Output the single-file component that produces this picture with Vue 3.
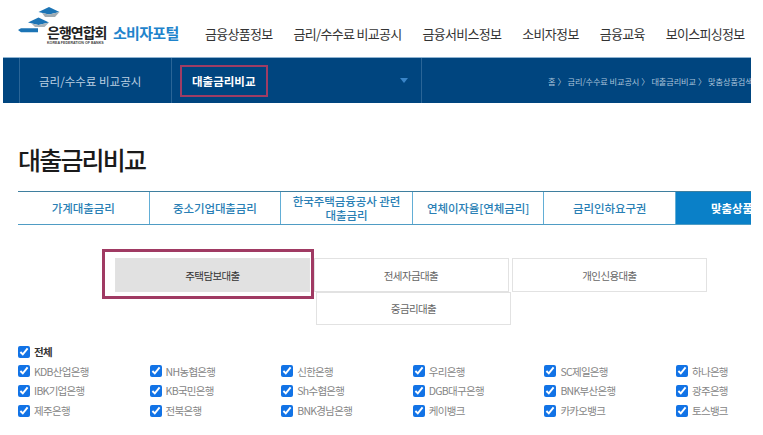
<template>
  <div class="page">
    <header class="top-header">
      <div class="logo">
        <svg class="logo-mark" width="44" height="30" viewBox="0 0 44 30">
          <path d="M20.5 7 L31 2 L41.5 7 L31 9.5 Z" fill="#1c74b5" />
          <path d="M24 8 L31 9.5 L41.5 7 L37 12 L27 12 Z" fill="#9fabb2" />
          <path d="M10 17.5 L20.5 12.5 L31 17.5 L20.5 20 Z" fill="#1c74b5" />
          <path d="M13.5 18.5 L20.5 20 L31 17.5 L26.5 22 L17 22 Z" fill="#a8b3b9" />
          <path d="M0 25 L3 23.2 L20 23.2 L20 27.2 L3 27.2 Z" fill="#1c74b5" />
        </svg>
        <div class="logo-text">
          <span class="logo-name">은행연합회</span>
          <span class="logo-sub">KOREA FEDERATION OF BANKS</span>
        </div>
        <span class="portal">소비자포털</span>
      </div>
      <nav class="main-nav">
        <a v-for="item in mainNav" :key="item">{{ item }}</a>
      </nav>
    </header>

    <div class="sub-bar">
      <div class="sub-cell first">금리/수수료 비교공시</div>
      <div class="sub-cell second">
        <span class="sub-current">대출금리비교</span>
        <span class="arrow"></span>
      </div>
      <div class="crumbs">
        <span>홈</span><i>〉</i><span>금리/수수료 비교공시</span><i>〉</i><span>대출금리비교</span><i>〉</i><span>맞춤상품검색</span>
      </div>
    </div>

    <h1 class="title">대출금리비교</h1>

    <div class="tabs">
      <div
        v-for="tab in tabs"
        :key="tab.lines[0]"
        class="tab"
        :class="{ active: tab.active }"
      >
        <span v-for="line in tab.lines" :key="line" class="tab-line">{{ line }}</span>
      </div>
    </div>

    <div class="loan-types">
      <div class="loan-row">
        <button class="loan-btn selected">주택담보대출</button>
        <button class="loan-btn">전세자금대출</button>
        <button class="loan-btn">개인신용대출</button>
      </div>
      <div class="loan-row second-row">
        <button class="loan-btn">중금리대출</button>
      </div>
    </div>

    <div class="banks">
      <label class="bank all"><input type="checkbox" checked />전체</label>
      <div class="bank-grid">
        <label v-for="bank in banks" :key="bank" class="bank">
          <input type="checkbox" checked />{{ bank }}
        </label>
      </div>
    </div>
  </div>
</template>

<script setup>
const mainNav = ['금융상품정보', '금리/수수료 비교공시', '금융서비스정보', '소비자정보', '금융교육', '보이스피싱정보']

const tabs = [
  { lines: ['가계대출금리'] },
  { lines: ['중소기업대출금리'] },
  { lines: ['한국주택금융공사 관련', '대출금리'] },
  { lines: ['연체이자율[연체금리]'] },
  { lines: ['금리인하요구권'] },
  { lines: ['맞춤상품검색'], active: true }
]

const banks = [
  'KDB산업은행', 'NH농협은행', '신한은행', '우리은행', 'SC제일은행', '하나은행',
  'IBK기업은행', 'KB국민은행', 'Sh수협은행', 'DGB대구은행', 'BNK부산은행', '광주은행',
  '제주은행', '전북은행', 'BNK경남은행', '케이뱅크', '카카오뱅크', '토스뱅크'
]
</script>

<style>
html, body {
  margin: 0;
  background: #fff;
  overflow: hidden;
}
</style>

<style scoped>
.page {
  width: 763px;
  height: 435px;
  overflow: hidden;
  background: #fff;
  font-family: "Noto Sans CJK KR", "Noto Sans", sans-serif;
  color: #333;
}

.top-header {
  height: 57px;
  display: flex;
  align-items: flex-start;
  box-sizing: border-box;
}

.logo {
  position: relative;
  width: 205px;
  height: 57px;
  flex-shrink: 0;
}

.logo-mark {
  position: absolute;
  left: 18px;
  top: 5px;
}

.logo-text {
  position: absolute;
  left: 47px;
  top: 24px;
  display: flex;
  flex-direction: column;
}

.logo-name {
  font-size: 14px;
  font-weight: 700;
  line-height: 17px;
  letter-spacing: -1px;
  color: #222;
}

.logo-sub {
  font-size: 3.6px;
  line-height: 4px;
  font-weight: 700;
  white-space: nowrap;
  color: #444;
  font-family: "Liberation Sans", sans-serif;
}

.portal {
  position: absolute;
  left: 113px;
  top: 22px;
  font-size: 15px;
  line-height: 22px;
  font-weight: 700;
  letter-spacing: -0.7px;
  color: #1f84cc;
}

.main-nav {
  display: flex;
  gap: 21px;
  padding-top: 24px;
  white-space: nowrap;
}

.main-nav a {
  font-size: 13px;
  line-height: 19px;
  letter-spacing: -0.7px;
  color: #333;
}

.sub-bar {
  margin-left: 3px;
  width: 748px;
  height: 46px;
  background: #00457f;
  display: flex;
  align-items: stretch;
  border-top: 1px solid #8fb4d2;
  box-sizing: border-box;
}

.sub-cell {
  display: flex;
  align-items: center;
  box-sizing: border-box;
  font-size: 11.5px;
}

.first {
  margin-left: 16px;
  width: 152px;
  padding-left: 19px;
  color: #bcd0e2;
  border-left: 1px solid #2a6597;
}

.second {
  width: 251px;
  padding-left: 20px;
  color: #fff;
  font-weight: 700;
  border-left: 1px solid #2a6597;
  border-right: 1px solid #2a6597;
  position: relative;
}

.sub-current {
  position: relative;
}

.sub-current::after {
  content: "";
  position: absolute;
  left: -12px;
  right: -13px;
  top: -8px;
  bottom: -8px;
  border: 2.5px solid #a03c64;
}

.arrow {
  position: absolute;
  right: 13px;
  top: 20px;
  width: 0;
  height: 0;
  border-left: 4px solid transparent;
  border-right: 4px solid transparent;
  border-top: 5px solid #3a85c8;
}

.crumbs {
  flex: 1;
  min-width: 0;
  overflow: hidden;
  display: flex;
  align-items: center;
  padding-left: 126px;
  white-space: nowrap;
  font-size: 8.2px;
  letter-spacing: -0.1px;
  color: #a9c3da;
}

.crumbs i {
  font-style: normal;
  margin: 0 2px;
}

.title {
  margin: 38px 0 0 18px;
  font-size: 25px;
  line-height: 36px;
  font-weight: 500;
  letter-spacing: -1.8px;
  color: #1a1a1a;
}

.tabs {
  margin: 14px 0 0 18px;
  width: 733px;
  display: flex;
  overflow: hidden;
  border-top: 1px solid #3f7f9f;
  border-bottom: 1px solid #4f9cc4;
  height: 34px;
  box-sizing: border-box;
}

.tab {
  flex: 0 0 131.6px;
  display: flex;
  flex-direction: column;
  align-items: center;
  justify-content: center;
  box-sizing: border-box;
  text-align: center;
  font-size: 11.5px;
  line-height: 14px;
  letter-spacing: -0.1px;
  font-weight: 500;
  color: #2a7fb5;
  border-right: 1px solid #62aed6;
  white-space: nowrap;
}

.tab.active {
  background: #0a80c8;
  color: #fff;
  font-weight: 700;
  border-right: 0;
  flex-basis: 75px;
  align-items: flex-start;
  padding-left: 35px;
  overflow: hidden;
}

.tab-line {
  display: block;
}

.loan-types {
  margin-top: 33px;
  height: 67px;
}

.loan-row {
  display: flex;
  gap: 3.5px;
  margin-left: 115px;
}

.second-row {
  margin-left: 316px;
}

.loan-btn {
  width: 195px;
  height: 34px;
  padding: 0;
  background: #fff;
  border: 1px solid #e2e2e2;
  font: inherit;
  font-size: 10.5px;
  letter-spacing: -0.6px;
  color: #666;
  box-sizing: border-box;
}

.second-row .loan-btn {
  height: 33px;
}

.loan-btn.selected {
  background: #e1e1e1;
  color: #333;
  position: relative;
}

.loan-btn.selected::after {
  content: "";
  position: absolute;
  left: -14px;
  right: -5px;
  top: -10px;
  bottom: -8px;
  border: 3px solid #a03a63;
}

.banks {
  margin: 17px 0 0 18px;
}

.bank {
  display: flex;
  align-items: center;
  height: 19.6px;
  font-size: 10.5px;
  letter-spacing: -0.7px;
  color: #858585;
  white-space: nowrap;
}

.bank.all {
  font-weight: 700;
  color: #333;
}

.bank input {
  width: 12px;
  height: 12px;
  margin: 0 4px 0 0;
  accent-color: #1273e6;
  flex-shrink: 0;
}

.bank-grid {
  display: grid;
  grid-template-columns: repeat(6, 131.6px);
}
</style>
